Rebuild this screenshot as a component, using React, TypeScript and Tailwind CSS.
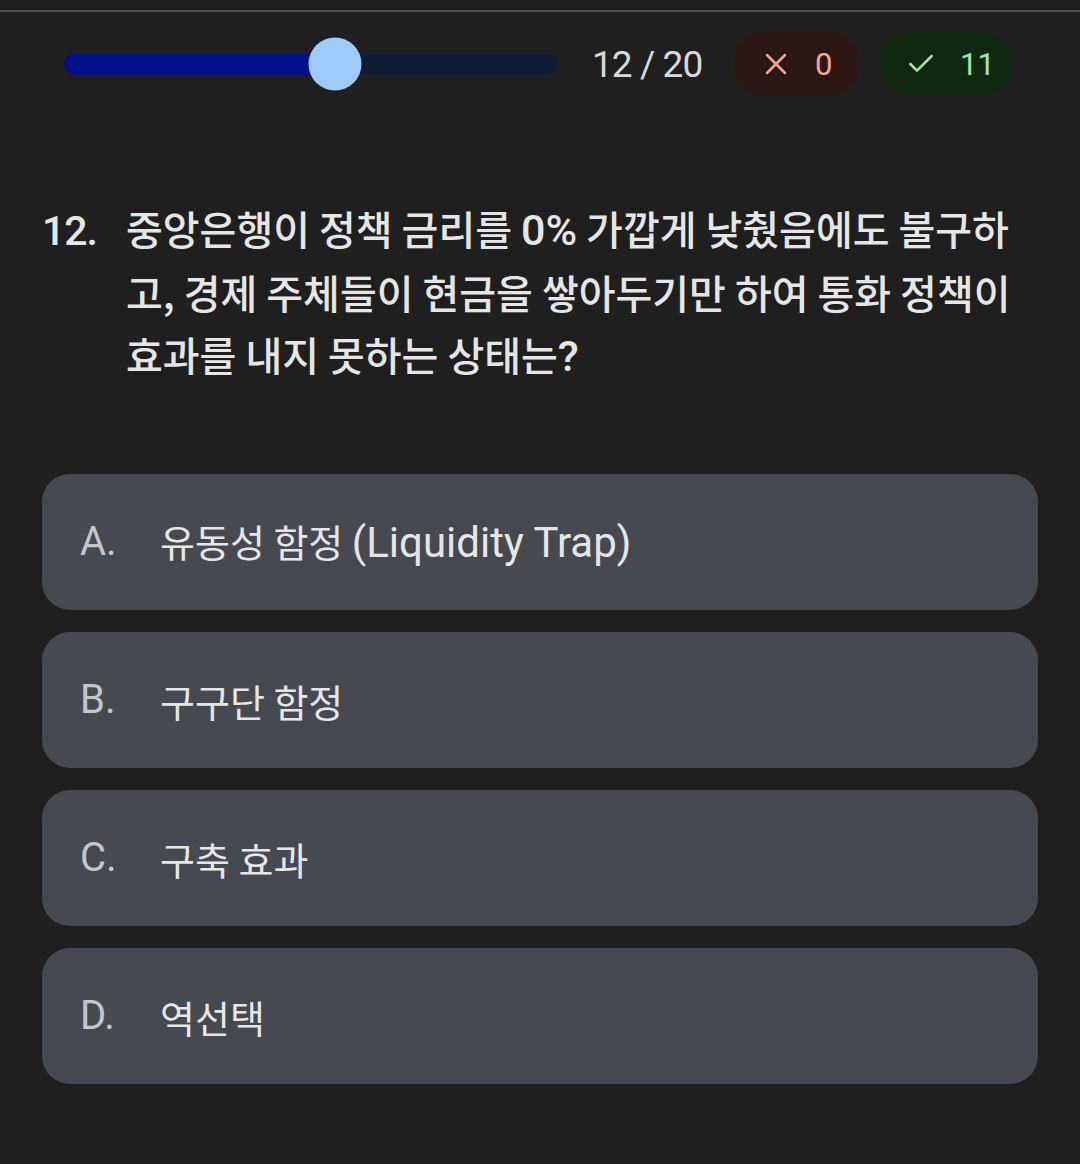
import type { ReactNode } from "react";
import { Check, X } from "lucide-react";

const roboto = { fontFamily: "Roboto, 'Noto Sans CJK KR', sans-serif" };
const korean = { fontFamily: "'Noto Sans CJK KR', Roboto, sans-serif" };

// Latin runs are drawn a bit larger than the Hangul around them, like the phone font does
function Latin({ children, size }: { children: ReactNode; size: string }) {
  return (
    <span className={size} style={roboto}>
      {children}
    </span>
  );
}

const options: { key: string; text: ReactNode }[] = [
  {
    key: "A",
    text: (
      <>
        유동성 함정 <Latin size="text-[42px]">(Liquidity Trap)</Latin>
      </>
    ),
  },
  { key: "B", text: "구구단 함정" },
  { key: "C", text: "구축 효과" },
  { key: "D", text: "역선택" },
];

export default function App() {
  const progress = (335 - 64) / 494;

  return (
    <div className="min-h-[1164px] bg-[#1f1f1f] text-[#e3e3e3]" style={korean}>
      <div className="h-[10px]" />
      <div className="h-[2px] bg-[#4f4f4f]" />

      {/* Progress bar */}
      <div className="flex items-center pl-[64px] pt-[20px]" style={roboto}>
        <div className="relative h-[21px] w-[494px] rounded-full bg-[#101c33]">
          <div
            className="absolute left-0 top-0 h-full rounded-full bg-[#00118a]"
            style={{ width: `${progress * 100}%` }}
          />
          <div
            className="absolute top-1/2 h-[53px] w-[53px] -translate-x-1/2 -translate-y-1/2 rounded-full bg-[#9ecbfa]"
            style={{ left: `${progress * 100}%` }}
          />
        </div>
        <span className="ml-[34px] w-[111px] text-[37px] leading-none tracking-tight text-[#d9d9d9]">
          12 / 20
        </span>
        <div className="ml-[30px] flex h-[64px] w-[127px] items-center rounded-full bg-[#2c1715] pl-[25px] text-[#f2a59b]">
          <X className="h-[36px] w-[36px]" strokeWidth={1.7} />
          <span className="ml-[21px] text-[31px] leading-none">0</span>
        </div>
        <div className="ml-[20px] flex h-[64px] w-[132px] items-center rounded-full bg-[#0f2812] pl-[25px] text-[#a6e3a8]">
          <Check className="h-[32px] w-[32px]" strokeWidth={1.9} />
          <span className="ml-[23px] text-[31px] leading-none">11</span>
        </div>
      </div>

      {/* Question */}
      <div className="mt-[101px] flex items-baseline px-[42px] text-[40px] font-medium leading-[62px] text-[#e6e6e6]">
        <span className="w-[84px] shrink-0 text-[41px] tracking-tight" style={roboto}>
          12.
        </span>
        <p className="flex-1">
          중앙은행이 정책 금리를 <Latin size="text-[43px]">0%</Latin> 가깝게 낮췄음에도 불구하고, 경제
          주체들이 현금을 쌓아두기만 하여 통화 정책이 효과를 내지 못하는 상태는
          <Latin size="text-[43px]">?</Latin>
        </p>
      </div>

      {/* Options */}
      <div className="mt-[87px] flex flex-col gap-[22px] px-[42px]">
        {options.map((o) => (
          <div
            key={o.key}
            className="flex h-[136px] items-center rounded-[28px] bg-[#46494f] px-[38px] text-[38px]"
          >
            <span className="w-[80px] shrink-0 text-[40px] text-[#c4c6ca]" style={roboto}>
              {o.key}.
            </span>
            <span className="text-[#e6e6e6]">{o.text}</span>
          </div>
        ))}
      </div>
    </div>
  );
}
